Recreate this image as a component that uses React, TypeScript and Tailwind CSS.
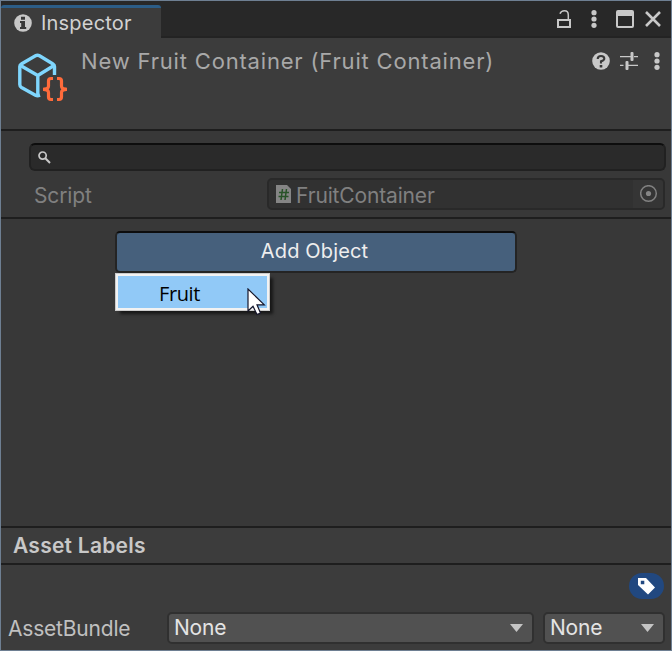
import React from "react";

const LINE = "h-0.5 shrink-0 bg-[#1e1e1e]";

function Dots() {
  return (
    <svg width="6" height="18" viewBox="0 0 6 18" fill="#c8c8c8">
      <circle cx="3" cy="2.7" r="2.6" />
      <circle cx="3" cy="9" r="2.6" />
      <circle cx="3" cy="15.3" r="2.6" />
    </svg>
  );
}

function TabBar() {
  return (
    <div className="flex h-[37px] shrink-0 items-end bg-[#282828]">
      <div className="flex h-[33px] w-[160px] items-center rounded-t-[3px] border-t-[3px] border-[#2c5d87] bg-[#3c3c3c] pl-[13px]">
        <svg width="18" height="18" viewBox="0 0 18 18">
          <circle cx="9" cy="9" r="8.8" fill="#c8c8c8" />
          <path d="M7 2.7h4v3H7zM6 7.1h5v6h1.2v2H6v-2h1.2V9.1H6z" fill="#383838" />
        </svg>
        <span className="ml-[9px] text-[20px] leading-6 tracking-[0.2px] text-[#d2d2d2]">Inspector</span>
      </div>
      <div className="flex h-full flex-1 items-center border-b-2 border-[#232323] pr-2">
        <svg className="ml-auto" width="14" height="19" viewBox="0 0 14 19" fill="none" stroke="#c8c8c8" strokeWidth="2">
          <rect x="1" y="11" width="12" height="7" />
          <path d="M3 4.800Q4 1.800 7.500 1.800Q11.300 1.800 11.300 6v5" strokeWidth="1.500" />
        </svg>
        <div className="ml-5"><Dots /></div>
        <svg className="ml-[19px]" width="18" height="18" viewBox="0 0 18 18">
          <rect x="1" y="1" width="16" height="16" rx="1" fill="none" stroke="#c8c8c8" strokeWidth="2" />
          <path d="M1 1h16v5H1z" fill="#c8c8c8" />
        </svg>
        <svg className="ml-[11px] mr-[2px]" width="16" height="16" viewBox="0 0 16 16" stroke="#c8c8c8" strokeWidth="2.6">
          <path d="M1 1l14 14M15 1L1 15" />
        </svg>
      </div>
    </div>
  );
}

function Header() {
  return (
    <div className="flex h-[91px] shrink-0 items-start bg-[#3c3c3c] pl-4 pr-[11px]">
      <svg className="mt-[14px]" width="52" height="52" viewBox="17 52 52 52" fill="none">
        <g stroke="#7fd6fd" strokeWidth="3.400" strokeLinejoin="round">
          <path d="M54.500 75V66.500Q54.500 64.800 53 64L39.500 55.800Q37.500 54.700 35.500 55.800L21.300 64Q19.800 64.800 19.800 66.500V84.500Q19.800 86.500 21.500 87.500L35.500 95.200Q37.500 96.200 40 95.200" />
          <path d="M20.500 65.500L37.800 75.500L54 65.500M37.800 75.500V95" />
        </g>
        <g stroke="#ff6b3b" strokeWidth="3.200">
          <path d="M53 78.500H51Q48.500 78.500 48.500 81V86Q48.500 89.300 43.500 89.300Q48.500 89.300 48.500 92.500V97Q48.500 99.500 51 99.500H53" />
          <path d="M57 78.500H59Q61.500 78.500 61.500 81V86Q61.500 89.300 66.500 89.300Q61.500 89.300 61.500 92.500V97Q61.500 99.500 59 99.500H57" />
          <path d="M43 89.300h4M63 89.300h4" />
        </g>
      </svg>
      <h1 className="ml-[12px] mt-[9px] whitespace-nowrap text-[22px] font-normal leading-7 tracking-[0.82px] text-[#a8a8a8]">New Fruit Container (Fruit Container)</h1>
      <div className="ml-auto mt-[14px] flex items-center">
        <svg width="18" height="18" viewBox="0 0 18 18">
          <circle cx="9" cy="9" r="8.8" fill="#c8c8c8" />
          <path d="M5.700 7Q5.700 4 9 4Q12.300 4 12.300 6.700Q12.300 8.300 9 9.200V11.500" fill="none" stroke="#383838" strokeWidth="2.100" />
          <path d="M7.700 13h2.600v2.500H7.700z" fill="#383838" />
        </svg>
        <svg className="ml-[10px]" width="18" height="18" viewBox="0 0 18 18" fill="#c8c8c8">
          <path d="M0 4h11v1.200H0zM14 4h4v1.200h-4zM0 12.700h3.500v1.200H0zM7 12.700h11v1.200H7z" />
          <rect x="10.500" y="0" width="3" height="9" rx="1" />
          <rect x="5.500" y="9" width="3" height="9" rx="1" />
        </svg>
        <div className="ml-[16px]"><Dots /></div>
      </div>
    </div>
  );
}

function Fields() {
  return (
    <div className="flex h-[86px] shrink-0 flex-col pl-7 pr-[5px] pt-3">
      <div className="flex h-[28px] items-center rounded-[6px] border-2 border-[#212121] border-t-[#0d0d0d] bg-[#2a2a2a] pl-[7px] pt-px">
        <svg width="13" height="13" viewBox="0 0 13 13" fill="none" stroke="#c8c8c8">
          <circle cx="4.600" cy="4.600" r="3.600" strokeWidth="1.700" />
          <path d="M7.300 7.300l4.700 4.700" strokeWidth="2" />
        </svg>
      </div>
      <div className="mt-[7px] flex h-8 items-center pl-[5px] pr-px">
        <span className="w-[233px] pt-[3px] text-[21px] leading-7 tracking-[-0.15px] text-[#808080]">Script</span>
        <div className="flex h-8 flex-1 overflow-hidden rounded-[5px] border-2 border-[#292929] bg-[#313131] text-[#808080]">
          <div className="flex flex-1 items-center pl-[7px]">
            <svg width="15" height="18" viewBox="0 0 15 18">
              <path d="M0 0h11l4 4v14H0z" fill="#858585" />
              <path d="M6.500 4L5 15M10.500 4L9 15M3 7.500h10M2.500 11.500h10" stroke="#285328" strokeWidth="1.500" />
            </svg>
            <span className="ml-[5px] pt-[3px] text-[21px] leading-7 tracking-[-0.15px]">FruitContainer</span>
          </div>
          <div className="flex w-[30px] items-center justify-center bg-[#353535]">
            <svg className="ml-px" width="18" height="18" viewBox="0 0 18 18">
              <circle cx="8.500" cy="8.500" r="7.800" fill="none" stroke="#808080" strokeWidth="1.500" />
              <circle cx="8.500" cy="8.500" r="2.600" fill="#858585" />
            </svg>
          </div>
        </div>
      </div>
    </div>
  );
}

function ObjectArea() {
  return (
    <div className="h-[307px] shrink-0 pl-[114px] pt-3">
      <div className="relative w-[402px]">
        <button className="block h-[42px] w-full rounded-[5px] border-2 border-[#242424] border-t-[#0d0d0d] bg-[#46607c] pb-[2px] pr-[3px] text-[20px] leading-[36px] tracking-[0.15px] text-[#eeeeee]">Add Object</button>
        <div className="absolute left-0 top-[42px] flex h-[38px] w-[155px] items-center border border-[#cccccc] bg-[#91c9f7] shadow-[4px_4px_3px_-1px_rgba(0,0,0,0.6)]">
          <div className="flex h-full w-full items-center border-2 border-[#f2f2f2] pl-[41px] pt-1 font-['Open_Sans',sans-serif] text-[20px] tracking-[-0.4px] text-black">Fruit</div>
          <svg className="absolute left-[131px] top-[14px]" width="20" height="29" viewBox="0 0 20 29">
            <path d="M1 1V23L6 18.200L10 26.500L13.500 25L10 16.800H17.300Z" fill="white" stroke="#15152a" strokeWidth="1.200" />
          </svg>
        </div>
      </div>
    </div>
  );
}

function Dropdown({ className }: { className: string }) {
  return (
    <div className={`flex h-8 items-center rounded-[5px] border-2 border-[#303030] bg-[#515151] pl-[5px] pr-[9px] ${className}`}>
      <span className="text-[21px] leading-7 tracking-[-0.2px] text-[#e4e4e4]">None</span>
      <svg className="ml-auto" width="13" height="8" viewBox="0 0 13 8">
        <path d="M0 0h13L6.500 8z" fill="#c4c4c4" />
      </svg>
    </div>
  );
}

function AssetLabels() {
  return (
    <div className="flex flex-1 flex-col bg-[#3c3c3c]">
      <h2 className="flex h-[35px] items-center pl-[12px] text-[21px] font-semibold tracking-[0.25px] text-[#c8c8c8]">Asset Labels</h2>
      <div className={LINE} />
      <div className="ml-auto mr-[7px] mt-2 flex h-[26px] w-[35px] items-center justify-center rounded-full bg-[#214880] pr-px">
        <svg width="17" height="17" viewBox="0 0 17 17">
          <path d="M0 0h8l9 9.500L10 16.500L0 7zM2.800 2.800v3.500h3.500V2.800z" fill="white" fillRule="evenodd" />
        </svg>
      </div>
      <div className="mt-[13px] flex h-8 items-center pl-[7px]">
        <span className="w-[159px] pt-[2px] text-[21px] leading-7 tracking-[-0.2px] text-[#c0c0c0]">AssetBundle</span>
        <Dropdown className="w-[367px]" />
        <Dropdown className="ml-[9px] w-[122px]" />
      </div>
    </div>
  );
}

export default function App() {
  return (
    <div className="flex h-[651px] w-[672px] flex-col overflow-hidden border border-[#6e7f92] bg-[#383838] font-[Inter,'Liberation_Sans',sans-serif]">
      <TabBar />
      <Header />
      <div className={LINE} />
      <Fields />
      <div className={LINE} />
      <ObjectArea />
      <div className={LINE} />
      <AssetLabels />
    </div>
  );
}
